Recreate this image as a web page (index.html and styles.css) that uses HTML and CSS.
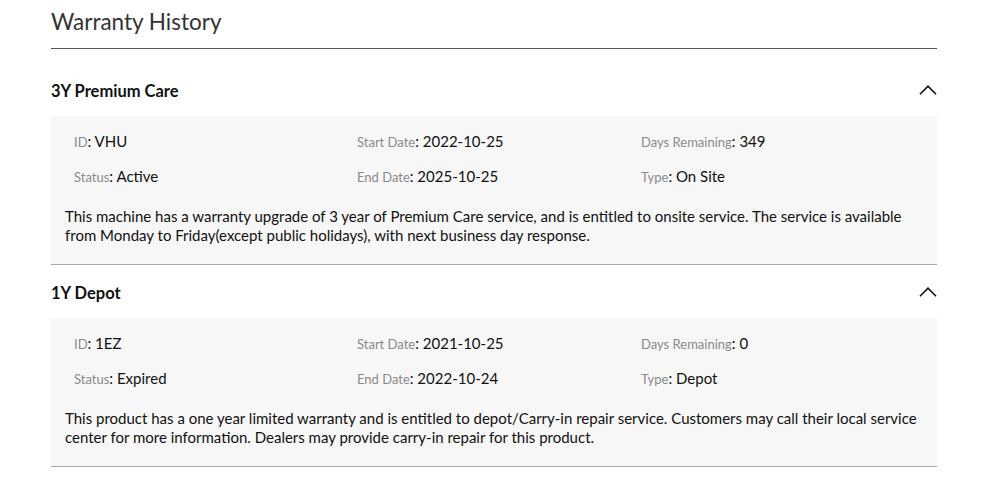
FILE: index.html
```html
<!DOCTYPE html>
<html>
<head>
<meta charset="utf-8">
<link rel="stylesheet" href="styles.css">
</head>
<body>
<div class="page">
  <h2 class="page-title">Warranty History</h2>

  <section class="warranty">
    <div class="warranty-header">
      <span class="warranty-name">3Y Premium Care</span>
      <svg class="chevron" width="18" height="10" viewBox="0 0 18 10"><path d="M1 9.2 L9 1.2 L17 9.2" fill="none" stroke="#111" stroke-width="1.6"/></svg>
    </div>
    <div class="warranty-body">
      <div class="fields">
        <div class="field"><span class="label">ID</span>: VHU</div>
        <div class="field"><span class="label">Start Date</span>: 2022-10-25</div>
        <div class="field"><span class="label">Days Remaining</span>: 349</div>
        <div class="field"><span class="label">Status</span>: Active</div>
        <div class="field"><span class="label">End Date</span>: 2025-10-25</div>
        <div class="field"><span class="label">Type</span>: On Site</div>
      </div>
      <p class="desc">This machine has a warranty upgrade of 3 year of Premium Care service, and is entitled to onsite service. The service is available from Monday to Friday(except public holidays), with next business day response.</p>
    </div>
  </section>

  <section class="warranty">
    <div class="warranty-header">
      <span class="warranty-name">1Y Depot</span>
      <svg class="chevron" width="18" height="10" viewBox="0 0 18 10"><path d="M1 9.2 L9 1.2 L17 9.2" fill="none" stroke="#111" stroke-width="1.6"/></svg>
    </div>
    <div class="warranty-body">
      <div class="fields">
        <div class="field"><span class="label">ID</span>: 1EZ</div>
        <div class="field"><span class="label">Start Date</span>: 2021-10-25</div>
        <div class="field"><span class="label">Days Remaining</span>: 0</div>
        <div class="field"><span class="label">Status</span>: Expired</div>
        <div class="field"><span class="label">End Date</span>: 2022-10-24</div>
        <div class="field"><span class="label">Type</span>: Depot</div>
      </div>
      <p class="desc">This product has a one year limited warranty and is entitled to depot/Carry-in repair service. Customers may call their local service center for more information. Dealers may provide carry-in repair for this product.</p>
    </div>
  </section>
</div>
</body>
</html>
```

FILE: styles.css
```css
html, body {
  margin: 0;
  padding: 0;
  background: #fff;
}
body {
  font-family: Lato, "Open Sans", sans-serif;
  color: #111;
}
.page {
  width: 886px;
  margin-left: 51px;
}
.page-title {
  margin: 0;
  padding: 9px 0 13px;
  font-size: 22.5px;
  line-height: 26px;
  font-weight: 400;
  color: #333;
  border-bottom: 1px solid #555;
}
.warranty:first-of-type {
  margin-top: 14px;
}
.warranty-header {
  display: flex;
  justify-content: space-between;
  align-items: center;
  padding: 18px 0 15px;
  height: 20px;
}
.warranty-name {
  font-size: 16.5px;
  line-height: 20px;
  font-weight: 700;
  color: #111;
}
.chevron {
  margin-top: -2px;
}
.warranty-body {
  background: #f7f7f7;
  padding: 14px 14px 19px;
  border-bottom: 1px solid #a8a8a8;
}
.fields {
  display: grid;
  grid-template-columns: 283px 284px 1fr;
  row-gap: 12px;
  padding-left: 9px;
}
.field {
  font-size: 15px;
  line-height: 22px;
  color: #111;
}
.label {
  font-size: 13px;
  color: #8a8a8a;
}
.desc {
  margin: 19px 0 0;
  font-size: 15px;
  line-height: 19px;
  color: #111;
}
```
